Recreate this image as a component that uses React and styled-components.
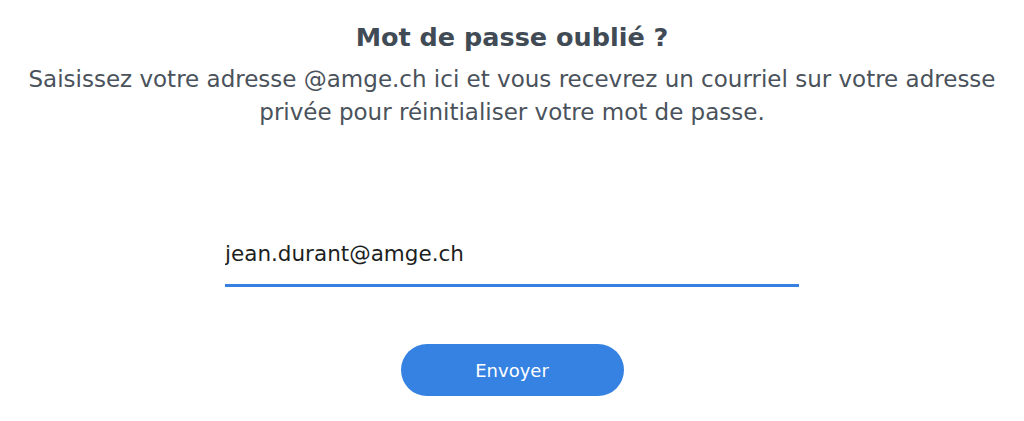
import React, { useState } from 'react'
import styled, { createGlobalStyle } from 'styled-components'

const GlobalStyle = createGlobalStyle`
  html, body {
    margin: 0;
    padding: 0;
    background: #ffffff;
  }
  body {
    font-family: 'DejaVu Sans', Verdana, sans-serif;
  }
`

const Page = styled.div`
  display: flex;
  flex-direction: column;
  align-items: center;
  padding-top: 22px;
`

const Title = styled.h1`
  margin: 0;
  font-size: 25.5px;
  font-weight: bold;
  line-height: 30px;
  color: #414b55;
`

const Intro = styled.p`
  margin: 11px 0 0;
  width: 1000px;
  text-align: center;
  font-size: 23px;
  line-height: 33px;
  color: #4a525b;
`

const Form = styled.form`
  display: flex;
  flex-direction: column;
  align-items: center;
  margin-top: 93px;
`

const EmailInput = styled.input`
  box-sizing: border-box;
  width: 574px;
  height: 65px;
  padding: 0;
  border: none;
  border-bottom: 3px solid #3580e1;
  outline: none;
  font-family: inherit;
  font-size: 21.5px;
  color: #1d1f22;
  background: transparent;
`

const SubmitButton = styled.button`
  margin-top: 57px;
  width: 223px;
  height: 52px;
  border: none;
  border-radius: 26px;
  background: #3582e2;
  color: #ffffff;
  font-family: inherit;
  font-size: 18px;
  cursor: pointer;
`

const App = () => {
  const [email, setEmail] = useState('jean.durant@amge.ch')

  return (
    <>
      <GlobalStyle />
      <Page>
        <Title>Mot de passe oublié ?</Title>
        <Intro>
          Saisissez votre adresse @amge.ch ici et vous recevrez un courriel sur votre adresse
          privée pour réinitialiser votre mot de passe.
        </Intro>
        <Form onSubmit={(e) => e.preventDefault()}>
          <EmailInput
            type='email'
            value={email}
            onChange={(e) => setEmail(e.target.value)}
          />
          <SubmitButton type='submit'>Envoyer</SubmitButton>
        </Form>
      </Page>
    </>
  )
}

export default App
